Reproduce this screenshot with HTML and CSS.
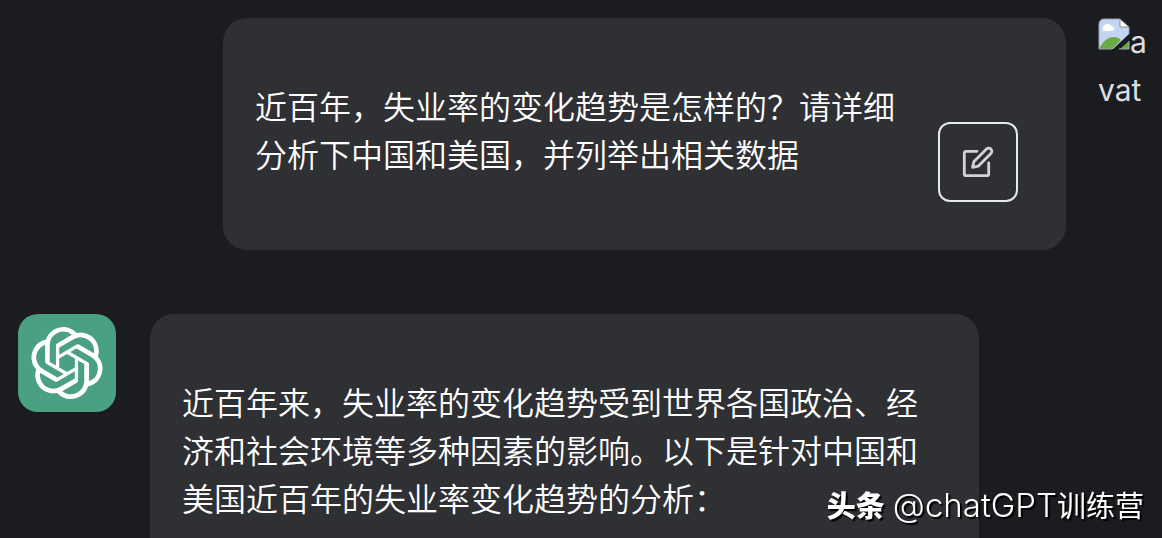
FILE: index.html
```
<!DOCTYPE html>
<html lang="zh-CN">
<head>
    <meta charset="UTF-8">
    <meta name="viewport" content="width=device-width, initial-scale=1.0">
    <title>Chat</title>
    <link rel="stylesheet" href="styles.css">
</head>
<body>
    <main class="chat">
        <section class="message user">
            <div class="bubble">
                <p>近百年，失业率的变化趋势是怎样的？请详细分析下中国和美国，并列举出相关数据</p>
                <button type="button" class="edit-button" aria-label="编辑">
                    <svg viewBox="0 0 32 32" fill="none" stroke="currentColor" stroke-width="2.8" stroke-linecap="round" stroke-linejoin="round">
                        <path d="M15 5.3H4.3a2 2 0 0 0-2 2v20.4a2 2 0 0 0 2 2h20.4a2 2 0 0 0 2-2V17"/>
                        <path d="M10.6 21.4l1.2-5.6L24.5 3.1a3 3 0 0 1 4.4 4.4L16.2 20.2z"/>
                    </svg>
                </button>
            </div>
            <div class="user-avatar">
                <svg viewBox="0 0 32 32" aria-hidden="true">
                    <path d="M6 1h16l9 9v6L15 31H1V6a5 5 0 0 1 5-5z" fill="#c3d5f3"/>
                    <path d="M1 31c4-8 9-12 15-12 3 0 5 1 7 3l-9 9zM22 31l9-8v8z" fill="#6aaa46"/>
                    <path d="M6 13a3 3 0 0 1 0-5c1-3 6-3 7 0 4 0 4 5 1 5z" fill="#fff"/>
                    <path d="M22 1v8h9z" fill="#fff" stroke="#8d8d8d"/>
                    <path d="M22 1H6a5 5 0 0 0-5 5v25h13M31 9v7M21 31h10v-8" fill="none" stroke="#a0a5ab"/>
                </svg><span>avat</span>
            </div>
        </section>

        <section class="message assistant">
            <div class="bot-avatar">
                <svg viewBox="0 0 24 24" fill="currentColor" role="img" aria-label="ChatGPT">
                    <path d="M22.2819 9.8211a5.9847 5.9847 0 0 0-.5157-4.9108 6.0462 6.0462 0 0 0-6.5098-2.9A6.0651 6.0651 0 0 0 4.9807 4.1818a5.9847 5.9847 0 0 0-3.9977 2.9 6.0462 6.0462 0 0 0 .7427 7.0966 5.98 5.98 0 0 0 .511 4.9107 6.051 6.051 0 0 0 6.5146 2.9001A5.9847 5.9847 0 0 0 13.2599 24a6.0557 6.0557 0 0 0 5.7718-4.2058 5.9894 5.9894 0 0 0 3.9977-2.9001 6.0557 6.0557 0 0 0-.7475-7.0729zm-9.022 12.6081a4.4755 4.4755 0 0 1-2.8764-1.0408l.1419-.0804 4.7783-2.7582a.7948.7948 0 0 0 .3927-.6813v-6.7369l2.02 1.1686a.071.071 0 0 1 .038.052v5.5826a4.504 4.504 0 0 1-4.4945 4.4944zm-9.6607-4.1254a4.4708 4.4708 0 0 1-.5346-3.0137l.142.0852 4.783 2.7582a.7712.7712 0 0 0 .7806 0l5.8428-3.3685v2.3324a.0804.0804 0 0 1-.0332.0615L9.74 19.9502a4.4992 4.4992 0 0 1-6.1408-1.6464zM2.3408 7.8956a4.485 4.485 0 0 1 2.3655-1.9728V11.6a.7664.7664 0 0 0 .3879.6765l5.8144 3.3543-2.0201 1.1685a.0757.0757 0 0 1-.071 0l-4.8303-2.7865A4.504 4.504 0 0 1 2.3408 7.872zm16.5963 3.8558L13.1038 8.364 15.1192 7.2a.0757.0757 0 0 1 .071 0l4.8303 2.7913a4.4944 4.4944 0 0 1-.6765 8.1042v-5.6772a.79.79 0 0 0-.407-.667zm2.0107-3.0231l-.142-.0852-4.7735-2.7818a.7759.7759 0 0 0-.7854 0L9.409 9.2297V6.8974a.0662.0662 0 0 1 .0284-.0615l4.8303-2.7866a4.4992 4.4992 0 0 1 6.6802 4.66zM8.3065 12.863l-2.02-1.1638a.0804.0804 0 0 1-.038-.0567V6.0742a4.4992 4.4992 0 0 1 7.3757-3.4537l-.142.0805L8.704 5.459a.7948.7948 0 0 0-.3927.6813zm1.0976-2.3654l2.602-1.4998 2.6069 1.4998v2.9994l-2.5974 1.4997-2.6067-1.4997Z"/>
                </svg>
            </div>
            <div class="bubble">
                <p>近百年来，失业率的变化趋势受到世界各国政治、经济和社会环境等多种因素的影响。以下是针对中国和美国近百年的失业率变化趋势的分析：</p>
            </div>
        </section>
    </main>

    <div class="watermark"><strong>头条</strong><span class="handle">@chatGPT</span><span>训练营</span></div>
</body>
</html>
```
FILE: styles.css
```
* {
    box-sizing: border-box;
}
body {
    margin: 0;
    height: 100vh;
    overflow: hidden;
    background-color: #1b1c20;
    color: #fff;
    font-family: Inter, "Noto Sans CJK SC", sans-serif;
    font-size: 32px;
    line-height: 48px;
}
.chat {
    display: flex;
    flex-direction: column;
    gap: 64px;
    padding: 18px 14px 0 18px;
}
.message {
    display: flex;
    align-items: flex-start;
}
.bubble {
    flex: 1;
    display: flex;
    gap: 16px;
    padding: 63px 32px;
    border-radius: 24px;
    background-color: #2f3034;
    font-family: "Noto Sans CJK SC", sans-serif;
    font-weight: 350;
}
.bubble p {
    flex: 1;
    margin: 0;
}
.user {
    gap: 32px;
    padding-left: 205px;
}
.user .bubble {
    padding: 63px 48px 48px 32px;
}
.edit-button {
    display: flex;
    align-items: center;
    justify-content: center;
    width: 80px;
    height: 80px;
    margin-top: 41px;
    padding: 0;
    border: 2px solid #e5e8ef;
    border-radius: 12px;
    background: none;
    color: #d2d3d5;
    cursor: pointer;
}
.edit-button svg {
    width: 32px;
    height: 32px;
}
.user-avatar {
    width: 50px;
    color: #dcdde0;
    font-size: 30px;
    word-break: break-all;
}
.user-avatar svg {
    width: 32px;
    height: 32px;
    vertical-align: 3px;
}
.assistant {
    gap: 34px;
    padding-right: 169px;
}
.bot-avatar {
    display: flex;
    align-items: center;
    justify-content: center;
    width: 98px;
    height: 98px;
    border-radius: 20px;
    background-color: #4aa181;
}
.bot-avatar svg {
    width: 72px;
    height: 72px;
}
.watermark {
    position: fixed;
    right: 18px;
    bottom: 9px;
    display: flex;
    align-items: baseline;
    font-family: "Noto Sans CJK SC", sans-serif;
    font-size: 29px;
    font-weight: 400;
    text-shadow: 2px 2px 1px #000;
}
.watermark strong {
    margin-right: 8px;
    font-weight: 900;
}
.handle {
    font-family: Inter, sans-serif;
    font-size: 33px;
    font-weight: 350;
}
```
